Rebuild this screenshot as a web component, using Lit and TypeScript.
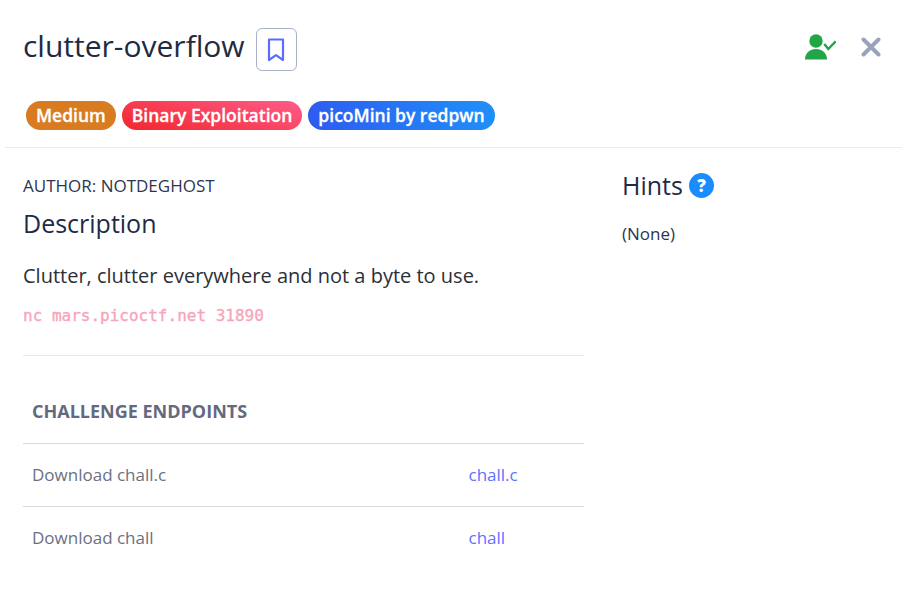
import { LitElement, html, css } from "lit";
import { customElement } from "lit/decorators.js";

@customElement("app-root")
export class AppRoot extends LitElement {
  static styles = css`
    :host {
      display: block;
      height: 590px;
      background: #fff;
      font-family: "Open Sans", "Noto Sans", sans-serif;
      color: #212b45;
      overflow: hidden;
    }
    .modal { padding: 0 3px 0 5px; }
    .header {
      height: 148px;
      border-bottom: 1px solid #e9ecef;
      padding: 28px 18px 0 18px;
      box-sizing: border-box;
      position: relative;
    }
    .title-row { display: flex; align-items: flex-start; gap: 11px; height: 43px; }
    h1 { margin: 0; font-size: 30px; font-weight: 400; line-height: 36px; color: #1f2a44; }
    .bookmark {
      width: 41px;
      height: 43px;
      box-sizing: border-box;
      border: 1px solid #a9b1c6;
      border-radius: 6px;
      display: flex;
      align-items: center;
      justify-content: center;
      background: #fff;
    }
    .actions {
      position: absolute;
      right: 21px;
      top: 34px;
      display: flex;
      align-items: center;
      gap: 25px;
    }
    .actions svg { display: block; }
    .badges { display: flex; gap: 6px; margin-top: 30px; padding-left: 3px; }
    .badge {
      height: 29px;
      line-height: 28px;
      padding: 0 10px;
      border-radius: 15px;
      color: #fff;
      font-size: 17.5px;
      font-weight: 600;
      -webkit-text-stroke: 0.3px #fff;
      white-space: nowrap;
    }
    .medium { background: #d97b20; }
    .cat { background: linear-gradient(195deg, #ff5c8a 0%, #f2262c 100%); }
    .event { background: linear-gradient(75deg, #2e5bf0 0%, #1f90fa 100%); }
    .body { display: flex; padding: 0 18px; }
    .left { width: 561px; }
    .right { margin-left: 38px; }
    .author { margin-top: 27px; font-size: 17px; line-height: 22px; color: #2d3650; }
    h2 { margin: 0; font-size: 25px; font-weight: 400; line-height: 33px; color: #1f2a44; }
    .desc-h { margin-top: 10px; }
    .desc { margin: 22px 0 0; font-size: 20px; line-height: 27px; color: #2b2f38; }
    code {
      display: block;
      margin-top: 16px;
      font-family: "DejaVu Sans Mono", monospace;
      font-size: 16px;
      -webkit-text-stroke: 0.35px #f8a5bb;
      line-height: 22px;
      color: #f8a5bb;
    }
    .sep { border-top: 1px solid #e6e7ea; margin-top: 28px; }
    table { width: 100%; border-collapse: collapse; margin-top: 35px; }
    th {
      text-align: left;
      padding: 8px 9px 20px;
      font-size: 18px;
      line-height: 24px;
      font-weight: 700;
      color: #646a7e;
    }
    td {
      border-top: 1px solid #d9dadd;
      padding: 19px 9px;
      height: 24px;
      font-size: 17px;
      line-height: 24px;
      color: #6b7082;
    }
    td.link { width: 106.5px; color: #5f70ff; padding-left: 0; }
    .hints { display: flex; align-items: center; gap: 6px; margin-top: 21px; }
    .none { margin-top: 21px; font-size: 17px; line-height: 22px; color: #2d3650; }
  `;

  render() {
    return html`
      <div class="modal">
        <div class="header">
          <div class="title-row">
            <h1>clutter-overflow</h1>
            <div class="bookmark">
              <svg width="18" height="24" viewBox="0 0 18 24" fill="none" stroke="#5b6cff" stroke-width="2.2" stroke-linejoin="round">
                <path d="M2 1.500h14v20.500l-7-4.800-7 4.800z" />
              </svg>
            </div>
          </div>
          <div class="actions">
            <svg width="31" height="26" viewBox="0 0 31 26" fill="#22a546">
              <circle cx="11" cy="7" r="6.700" />
              <path d="M0 25.500c0-6 4.500-10.500 11-10.500s11 4.500 11 10.500z" />
              <path d="M19.300 10l4 5 7.400-7.700" fill="none" stroke="#22a546" stroke-width="2.400" />
            </svg>
            <svg width="20" height="20" viewBox="0 0 20 20" stroke="#9aa3bd" stroke-width="4" stroke-linecap="round">
              <path d="M2.500 2.500l15 15M17.500 2.500l-15 15" />
            </svg>
          </div>
          <div class="badges">
            <span class="badge medium">Medium</span>
            <span class="badge cat">Binary Exploitation</span>
            <span class="badge event">picoMini by redpwn</span>
          </div>
        </div>
        <div class="body">
          <div class="left">
            <div class="author">AUTHOR: NOTDEGHOST</div>
            <h2 class="desc-h">Description</h2>
            <p class="desc">Clutter, clutter everywhere and not a byte to use.</p>
            <code>nc mars.picoctf.net 31890</code>
            <div class="sep"></div>
            <table>
              <thead><tr><th colspan="2">CHALLENGE ENDPOINTS</th></tr></thead>
              <tbody>
                <tr><td>Download chall.c</td><td class="link">chall.c</td></tr>
                <tr><td>Download chall</td><td class="link">chall</td></tr>
              </tbody>
            </table>
          </div>
          <div class="right">
            <div class="hints">
              <h2>Hints</h2>
              <svg width="25" height="25" viewBox="0 0 25 25">
                <circle cx="12.500" cy="12.500" r="12.500" fill="#1a8cff" />
                <text x="12.500" y="18.500" text-anchor="middle" fill="#fff" font-size="17" font-weight="800" font-family="Open Sans, sans-serif">?</text>
              </svg>
            </div>
            <div class="none">(None)</div>
          </div>
        </div>
      </div>
    `;
  }
}
